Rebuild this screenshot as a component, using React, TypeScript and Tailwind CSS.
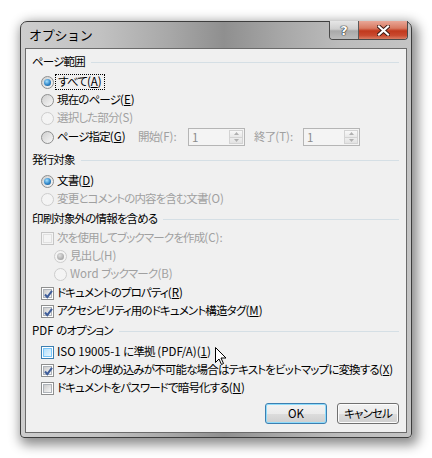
import React from "react";

const FONT = "[font-family:'Noto_Sans_CJK_JP','Noto_Sans',sans-serif] [font-feature-settings:'palt']";

function splitText(s: string, key: string): React.ReactNode[] {
  const parts = s.split(/([\u3000-\u9fff\uff00-\uffef]+)/);
  return parts
    .filter((p) => p.length > 0)
    .map((p, i) =>
      /[\u3000-\u9fff\uff00-\uffef]/.test(p) ? (
        <span key={key + i} className="tracking-[-0.85px]">
          {p}
        </span>
      ) : (
        <span key={key + i} className="tracking-normal">
          {p}
        </span>
      )
    );
}

function J({ children }: { children: React.ReactNode }) {
  const out: React.ReactNode[] = [];
  React.Children.forEach(children, (c, idx) => {
    if (typeof c === "string") out.push(...splitText(c, "s" + idx + "-"));
    else out.push(c);
  });
  return <>{out}</>;
}

function Radio({ checked = false, disabled = false }: { checked?: boolean; disabled?: boolean }) {
  return (
    <span
      className={`flex items-center justify-center w-[13px] h-[13px] rounded-full border shrink-0 ${
        disabled
          ? "border-[#cdcdcd] bg-[#f4f4f4]"
          : "border-[#8e8f8f] bg-[linear-gradient(135deg,#cfcfcf,#f8f8f8)]"
      }`}
    >
      {checked && (
        <span
          className={`w-[7px] h-[7px] rounded-full ${
            disabled
              ? "bg-[radial-gradient(circle_at_40%_35%,#e0e0e0,#a9a9a9_70%,#8f8f8f)]"
              : "bg-[radial-gradient(circle_at_40%_35%,#a8e2ff,#2f86c9_55%,#144a7a)]"
          }`}
        />
      )}
    </span>
  );
}

function Checkbox({
  checked = false,
  disabled = false,
  hover = false,
}: {
  checked?: boolean;
  disabled?: boolean;
  hover?: boolean;
}) {
  const outer = disabled
    ? "border-[#c5c5c5] bg-[#f4f4f4]"
    : hover
    ? "border-[#3c7fb1] bg-white"
    : "border-[#8e8f8f] bg-white";
  const inner = disabled
    ? "bg-[#f4f4f4] border-[#e0e0e0]"
    : hover
    ? "bg-[linear-gradient(135deg,#b1dffd,#e9f7fe)] border-[#79c6f9]"
    : "bg-[linear-gradient(135deg,#cbcbcb,#f7f7f7)] border-[#aeb3b9]";
  return (
    <span className={`relative flex items-center justify-center w-[13px] h-[13px] border shrink-0 ${outer}`}>
      <span className={`w-[9px] h-[9px] border ${inner}`} />
      {checked && (
        <svg className="absolute left-[1px] top-[1px]" width="11" height="11" viewBox="0 0 11 11">
          <path d="M2 5.5 L4.3 8.2 L9 1.8" fill="none" stroke="#3e5d9a" strokeWidth="2" />
        </svg>
      )}
    </span>
  );
}

function Section({ children, className = "" }: { children: React.ReactNode; className?: string }) {
  return (
    <div className={`flex items-center h-[18px] pl-[6px] pr-[7px] ${className}`}>
      <span className="text-black whitespace-nowrap">
        <J>{children}</J>
      </span>
      <div className="flex-1 h-px bg-[#d5dfe5] ml-[6px]" />
    </div>
  );
}

function Item({
  control,
  children,
  className = "",
  disabled = false,
}: {
  control: React.ReactNode;
  children: React.ReactNode;
  className?: string;
  disabled?: boolean;
}) {
  return (
    <div className={`flex items-center h-[18px] gap-[3px] ${className}`}>
      {control}
      <span className={`whitespace-nowrap ${disabled ? "text-[#a0a0a0]" : "text-black"}`}>
        <J>{children}</J>
      </span>
    </div>
  );
}

function U({ children }: { children: React.ReactNode }) {
  return <span className="underline underline-offset-[1px] decoration-1 tracking-normal">{children}</span>;
}

function Spin() {
  return (
    <div className="flex w-[57px] h-[18px] border border-[#b5b5b5] bg-[#f4f4f4]">
      <span className="flex-1 pl-[3px] pt-[3px] text-[#8c8c8c] leading-none tracking-normal">1</span>
      <div className="flex flex-col w-[15px] h-full py-[1px] pr-[1px]">
        <div className="flex-1 flex items-center justify-center border border-[#d3d3d3] bg-[linear-gradient(#f8f8f8,#e8e8e8)]">
          <svg width="5" height="3" viewBox="0 0 5 3">
            <path d="M0 3 L2.5 0 L5 3 Z" fill="#b0b0b0" />
          </svg>
        </div>
        <div className="flex-1 flex items-center justify-center border border-t-0 border-[#d3d3d3] bg-[linear-gradient(#eeeeee,#e2e2e2)]">
          <svg width="5" height="3" viewBox="0 0 5 3">
            <path d="M0 0 L2.5 3 L5 0 Z" fill="#b0b0b0" />
          </svg>
        </div>
      </div>
    </div>
  );
}

export default function App() {
  return (
    <div className={`relative w-[432px] h-[458px] bg-white pt-[21px] pl-[20px] text-[11.5px] leading-none ${FONT}`}>
      <div className="flex flex-col w-[392px] h-[417px] rounded-t-[7px] rounded-b-[4px] border border-[#3d3d3d] shadow-[3px_4px_12px_3px_rgba(0,0,0,0.45)] bg-[linear-gradient(90deg,#cdcdcd_0%,#c2c2c2_20%,#a8a8a8_38%,#8f8f8f_52%,#a6a6a6_66%,#bcbcbc_82%,#c4c4c4_100%)] px-[4px] pb-[4px]">
        {/* title bar */}
        <div className="flex items-start h-[26px] shrink-0">
          <span className="pl-[4px] pt-[6px] text-[13px] text-black [font-feature-settings:normal] tracking-[-0.3px]">オプション</span>
          <div className="ml-auto flex -mt-[1px] mr-[-1px] rounded-b-[4px] overflow-hidden border border-t-0 border-[#4a4a4a]">
            <div className="flex items-center justify-center w-[29px] h-[18px] border-r border-[#5a5a5a] bg-[linear-gradient(#e6e6e6_0%,#cfcfcf_45%,#a9a9a9_55%,#bcbcbc_100%)]">
              <span className="text-white font-bold text-[13px] [font-family:'DejaVu_Sans',sans-serif] [text-shadow:0_0_1px_#222,0_0_1px_#222,0_0_1px_#222]">?</span>
            </div>
            <div className="flex items-center justify-center w-[48px] h-[18px] bg-[linear-gradient(#e9a797_0%,#d87a62_40%,#c1391d_55%,#c9492e_80%,#d97d63_100%)]">
              <svg width="13" height="11" viewBox="0 0 13 11">
                <path d="M2 1.5 L11 9.5 M11 1.5 L2 9.5" stroke="#3a1a14" strokeWidth="4" strokeLinecap="square" />
                <path d="M2 1.5 L11 9.5 M11 1.5 L2 9.5" stroke="#ffffff" strokeWidth="2.2" strokeLinecap="square" />
              </svg>
            </div>
          </div>
        </div>
        {/* client */}
        <div className="flex-1 flex flex-col border border-[#6b6b6b] bg-[#f0f0f0]">
          <Section className="mt-[4px]">ページ範囲</Section>
          <div className="flex items-center h-[18px] gap-[3px] mt-[2px] pl-[15px]">
            <Radio checked />
            <span className="whitespace-nowrap text-black outline outline-1 outline-dotted outline-black outline-offset-[1px] px-[1px]">
              <J>
                すべて(<U>A</U>)
              </J>
            </span>
          </div>
          <Item className="pl-[15px]" control={<Radio />}>
            現在のページ(<U>E</U>)
          </Item>
          <Item className="pl-[15px]" disabled control={<Radio disabled />}>
            選択した部分(S)
          </Item>
          <div className="flex items-center h-[18px] mt-[1px] pl-[15px]">
            <Radio />
            <span className="ml-[3px] w-[81px] whitespace-nowrap text-black">
              <J>
                ページ指定(<U>G</U>)
              </J>
            </span>
            <span className="w-[50px] whitespace-nowrap text-[#a0a0a0]">
              <J>開始(F):</J>
            </span>
            <Spin />
            <span className="ml-[9px] w-[49px] whitespace-nowrap text-[#a0a0a0]">
              <J>終了(T):</J>
            </span>
            <Spin />
          </div>

          <Section className="mt-[5px]">発行対象</Section>
          <Item className="mt-[3px] pl-[15px]" control={<Radio checked />}>
            文書(<U>D</U>)
          </Item>
          <Item className="pl-[15px]" disabled control={<Radio disabled />}>
            変更とコメントの内容を含む文書(O)
          </Item>

          <Section className="mt-[2px]">印刷対象外の情報を含める</Section>
          <Item className="mt-[1px] pl-[15px]" disabled control={<Checkbox disabled />}>
            次を使用してブックマークを作成(C):
          </Item>
          <Item className="pl-[28px]" disabled control={<Radio checked disabled />}>
            見出し(H)
          </Item>
          <Item className="pl-[28px] h-[17px]" disabled control={<Radio disabled />}>
            Word ブックマーク(B)
          </Item>
          <Item className="mt-[1px] pl-[15px]" control={<Checkbox checked />}>
            ドキュメントのプロパティ(<U>R</U>)
          </Item>
          <Item className="pl-[15px]" control={<Checkbox checked />}>
            アクセシビリティ用のドキュメント構造タグ(<U>M</U>)
          </Item>

          <Section className="mt-[2px]">PDF のオプション</Section>
          <Item className="mt-[3px] pl-[15px]" control={<Checkbox hover />}>
            ISO 19005-1 に準拠 (PDF/A)(<U>1</U>)
          </Item>
          <Item className="pl-[15px]" control={<Checkbox checked />}>
            フォントの埋め込みが不可能な場合はテキストをビットマップに変換する(<U>X</U>)
          </Item>
          <Item className="pl-[15px]" control={<Checkbox />}>
            ドキュメントをパスワードで暗号化する(<U>N</U>)
          </Item>

          <div className="flex justify-end gap-[10px] pr-[7px] mt-[6px]">
            <button className="flex items-center justify-center w-[62px] h-[21px] rounded-[3px] border border-[#3c7fb1] shadow-[inset_0_0_0_1px_#8fdcfb] bg-[linear-gradient(#f2f2f2_0%,#ebebeb_50%,#dddddd_50%,#cfcfcf_100%)] text-black">
              OK
            </button>
            <button className="flex items-center justify-center w-[62px] h-[21px] rounded-[3px] border border-[#707070] shadow-[inset_0_0_0_1px_#fcfcfc] bg-[linear-gradient(#f2f2f2_0%,#ebebeb_50%,#dddddd_50%,#cfcfcf_100%)] text-black">
              <J>キャンセル</J>
            </button>
          </div>
        </div>
      </div>
      {/* mouse cursor */}
      <svg className="absolute left-[215px] top-[347px]" width="12" height="19" viewBox="0 0 12 19">
        <path
          d="M0.5 0.5 L0.5 15.5 L4 12 L6.5 17.5 L8.5 16.5 L6 11 L11 11 Z"
          fill="#ffffff"
          stroke="#000000"
          strokeWidth="1"
          strokeLinejoin="miter"
        />
      </svg>
    </div>
  );
}
